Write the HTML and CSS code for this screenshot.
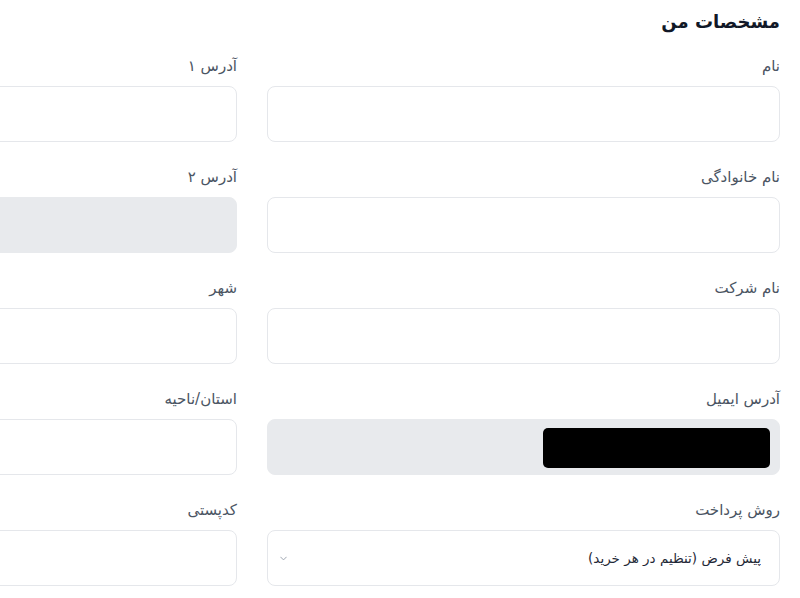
FILE: index.html
```html
<!DOCTYPE html>
<html lang="fa" dir="rtl">
<head>
    <meta charset="UTF-8">
    <meta name="viewport" content="width=device-width, initial-scale=1.0">
    <title>مشخصات من</title>
    <link rel="stylesheet" href="styles.css">
</head>
<body>
    <div class="profile">
        <h2 class="profile-title">مشخصات من</h2>

        <div class="form-grid">
            <div class="form-group">
                <label for="firstName">نام</label>
                <input type="text" id="firstName">
            </div>
            <div class="form-group">
                <label for="address1">آدرس ۱</label>
                <input type="text" id="address1">
            </div>

            <div class="form-group">
                <label for="lastName">نام خانوادگی</label>
                <input type="text" id="lastName">
            </div>
            <div class="form-group">
                <label for="address2">آدرس ۲</label>
                <input type="text" id="address2" disabled>
            </div>

            <div class="form-group">
                <label for="company">نام شرکت</label>
                <input type="text" id="company">
            </div>
            <div class="form-group">
                <label for="city">شهر</label>
                <input type="text" id="city">
            </div>

            <div class="form-group">
                <label>آدرس ایمیل</label>
                <div class="fake-input is-disabled">
                    <span class="redacted"></span>
                </div>
            </div>
            <div class="form-group">
                <label for="state">استان/ناحیه</label>
                <input type="text" id="state">
            </div>

            <div class="form-group">
                <label for="payment">روش پرداخت</label>
                <div class="select-wrap">
                    <select id="payment">
                        <option>پیش فرض (تنظیم در هر خرید)</option>
                    </select>
                    <svg class="select-arrow" viewBox="0 0 10 6" width="7" height="5">
                        <path d="M1 1l4 4 4-4" fill="none" stroke="#9ca3af" stroke-width="1.4" stroke-linecap="round" stroke-linejoin="round"/>
                    </svg>
                </div>
            </div>
            <div class="form-group">
                <label for="postcode">کدپستی</label>
                <input type="text" id="postcode">
            </div>
        </div>
    </div>
</body>
</html>
```

FILE: styles.css
```css
:root {
    --text-dark: #111827;
    --text-label: #4b5563;
    --border: #e5e7eb;
    --bg-disabled: #e8eaed;
    --radius: 8px;
}

html, body {
    margin: 0;
    padding: 0;
    background: #ffffff;
    overflow: hidden;
}

body {
    font-family: "DejaVu Sans", "Noto Sans", sans-serif;
    color: var(--text-dark);
}

.profile {
    width: 1056px;
    padding: 8px 20px 0 0;
}

.profile-title {
    margin: 0 0 18px;
    font-size: 18px;
    line-height: 28px;
    font-weight: 700;
}

.form-grid {
    display: grid;
    grid-template-columns: 1fr 1fr;
    column-gap: 30px;
    row-gap: 23px;
}

.form-group label {
    display: block;
    height: 24px;
    line-height: 24px;
    margin-bottom: 8px;
    font-size: 15px;
    color: var(--text-label);
}

.form-group input,
.fake-input,
.select-wrap select {
    display: block;
    width: 100%;
    height: 56px;
    box-sizing: border-box;
    border: 1px solid var(--border);
    border-radius: var(--radius);
    background: #ffffff;
    font-family: inherit;
    font-size: 14px;
    color: var(--text-dark);
    margin: 0;
}

.form-group input:disabled,
.fake-input.is-disabled {
    background: var(--bg-disabled);
    border-color: var(--bg-disabled);
}

.fake-input {
    padding: 8px 9px 0 0;
}

.redacted {
    display: block;
    width: 227px;
    height: 40px;
    background: #000000;
    border-radius: 5px;
}

.select-wrap {
    position: relative;
}

.select-wrap select {
    appearance: none;
    -webkit-appearance: none;
    padding: 0 18px 0 30px;
    font-size: 13.5px;
    color: #1f2937;
}

.select-arrow {
    position: absolute;
    left: 13px;
    top: 26px;
}
```
